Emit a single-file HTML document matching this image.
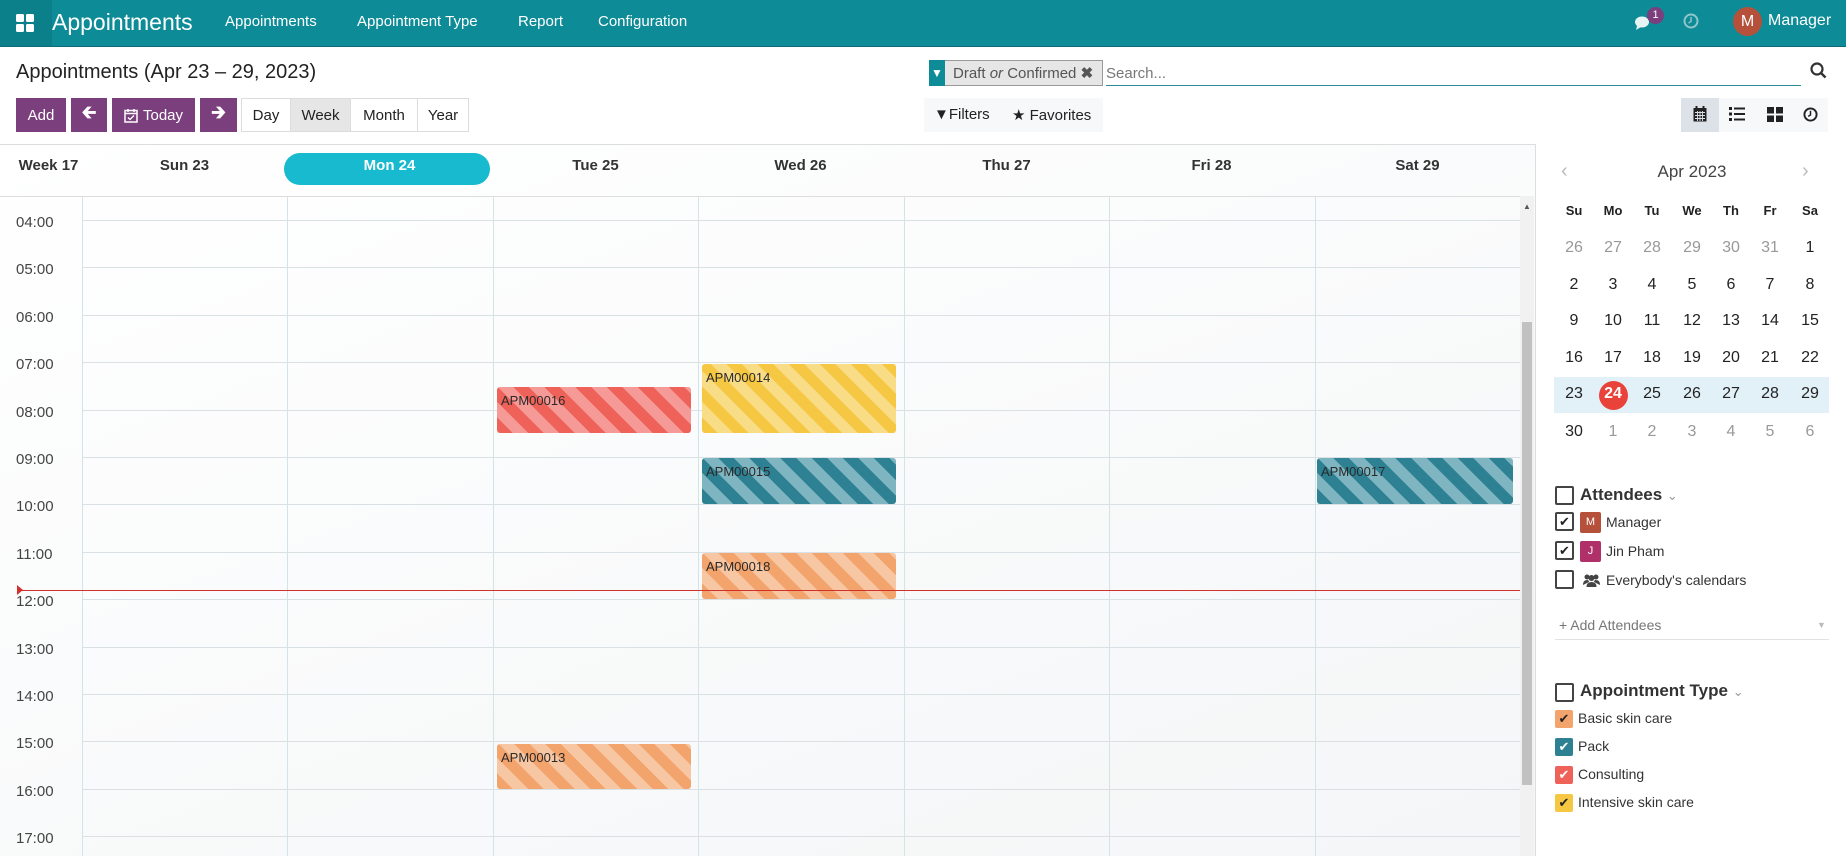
<!DOCTYPE html>
<html><head><meta charset="utf-8"><style>
*{box-sizing:border-box;margin:0;padding:0}
body{width:1846px;height:856px;overflow:hidden;font-family:"Liberation Sans",sans-serif;background:#fff;position:relative;color:#222}
.a{position:absolute}
.nav{left:0;top:0;width:1846px;height:47px;background:#0d8b97;border-bottom:1px solid #0a6d77}
.nav .m{color:#fff;font-size:15px;top:13px}
.btn{background:#7c3f7e;color:#fff;font-size:15px;display:flex;align-items:center;justify-content:center;top:98px;height:34px}
.vb{top:98px;height:34px;border:1px solid #dcdcdc;font-size:15px;display:flex;align-items:center;justify-content:center;color:#222;background:#fff}
.dh{top:157px;font-size:15px;font-weight:bold;color:#333;text-align:center;width:205px}
.vl{top:196px;width:1px;height:660px;background:#d3e4e8}
.hl{left:82px;width:1438px;height:1px;background:#d9e1e4}
.tl{left:16px;font-size:15px;color:#444}
.ev{border-radius:3px;font-size:13px;color:#2a2a2a;padding:6px 4px}
.mc{width:36px;text-align:center;font-size:16px;color:#222}
.cb{width:19px;height:19px;border:2px solid #444;border-radius:2px;background:#fff}
.ck{width:18px;height:18px;border-radius:2px;color:#fff;font-size:13px;text-align:center;line-height:18px}
.st{font-size:14px;color:#333}
</style></head><body>
<div class="a nav">
 <div class="a" style="left:0;top:0;width:52px;height:46px;background:#0b7f8a"></div>
 <svg class="a" style="left:16px;top:14px" width="18" height="18" viewBox="0 0 18 18" fill="#fff"><rect x="0" y="0" width="8" height="8" rx="1.5"/><rect x="10" y="0" width="8" height="8" rx="1.5"/><rect x="0" y="10" width="8" height="8" rx="1.5"/><rect x="10" y="10" width="8" height="8" rx="1.5"/></svg>
 <div class="a" style="left:52px;top:9px;color:#fff;font-size:23px">Appointments</div>
 <div class="a m" style="left:225px">Appointments</div>
 <div class="a m" style="left:357px">Appointment Type</div>
 <div class="a m" style="left:518px">Report</div>
 <div class="a m" style="left:598px">Configuration</div>
 <svg class="a" style="left:1634px;top:14px" width="20" height="18" viewBox="0 0 20 18" fill="#e8f3f4"><ellipse cx="8" cy="8" rx="7" ry="5.5"/><path d="M3 12 L2 16 L7 13Z"/></svg>
 <div class="a" style="left:1647px;top:7px;width:17px;height:17px;border-radius:50%;background:#7c3f7e;color:#fff;font-size:11px;text-align:center;line-height:17px">1</div>
 <svg class="a" style="left:1683px;top:13px" width="16" height="16" viewBox="0 0 16 16"><circle cx="8" cy="8" r="6.5" stroke="#8fc6cc" stroke-width="2" fill="none"/><path d="M8 4V8.5L5.5 10" stroke="#8fc6cc" stroke-width="1.5" fill="none"/></svg>
 <div class="a" style="left:1733px;top:7px;width:29px;height:29px;border-radius:50%;background:#b5503a;color:#fff;font-size:16px;text-align:center;line-height:29px">M</div>
 <div class="a m" style="left:1768px;font-size:16px;top:12px">Manager</div>
</div>

<div class="a" style="left:16px;top:61px;font-size:20px;color:#222">Appointments (Apr 23 – 29, 2023)</div>
<div class="a btn" style="left:16px;width:50px">Add</div>
<div class="a btn" style="left:71px;width:36px;font-size:18px;font-weight:bold">&#129136;</div>
<div class="a btn" style="left:112px;width:83px"><svg width="14" height="15" viewBox="0 0 14 15" style="margin-right:5px"><rect x="1" y="2.5" width="12" height="11.5" fill="none" stroke="#fff" stroke-width="1.5"/><path d="M1 5.5H13M4 1V4M10 1V4" stroke="#fff" stroke-width="1.5"/><path d="M4 9.5L6 11.5L10 7.5" stroke="#fff" stroke-width="1.3" fill="none"/></svg>Today</div>
<div class="a btn" style="left:200px;width:37px;font-size:18px;font-weight:bold">&#129138;</div>
<div class="a vb" style="left:241px;width:50px">Day</div>
<div class="a vb" style="left:290px;width:61px;background:#e6e6e6">Week</div>
<div class="a vb" style="left:350px;width:68px">Month</div>
<div class="a vb" style="left:417px;width:52px">Year</div>

<div class="a" style="left:929px;top:60px;width:174px;height:26px;background:#e6e6e6;border:1px solid #999"></div>
<div class="a" style="left:929px;top:60px;width:16px;height:26px;background:#0d8b97;color:#fff;font-size:12px;text-align:center;line-height:26px">&#9660;</div>
<div class="a" style="left:953px;top:64px;font-size:15px;color:#555">Draft <i>or</i> Confirmed <b style="color:#555">&#10006;</b></div>
<div class="a" style="left:1106px;top:65px;font-size:15px;color:#777">Search...</div>
<div class="a" style="left:1106px;top:85px;width:695px;height:1px;background:#2b8b96"></div>
<svg class="a" style="left:1810px;top:62px" width="17" height="17" viewBox="0 0 17 17"><circle cx="7" cy="7" r="5.5" stroke="#333" stroke-width="2.2" fill="none"/><path d="M11 11 L15.5 15.5" stroke="#333" stroke-width="2.5"/></svg>
<div class="a" style="left:924px;top:98px;width:179px;height:34px;background:#f6f8f9"></div>
<div class="a" style="left:934px;top:106px;font-size:15px;color:#222">&#9660;Filters</div>
<div class="a" style="left:1012px;top:106px;font-size:15px;color:#222">&#9733; Favorites</div>
<div class="a" style="left:1681px;top:98px;width:147px;height:34px;background:#f6f8f9"></div>
<div class="a" style="left:1681px;top:98px;width:38px;height:34px;background:#dde1e8"></div>
<svg class="a" style="left:1693px;top:106px" width="14" height="16" viewBox="0 0 14 16"><rect x="0.5" y="2" width="13" height="13.5" fill="#222"/><path d="M3.5 0V3M10.5 0V3" stroke="#222" stroke-width="2"/><path d="M2 6.5H12M2 9.5H12M2 12.5H12M4.5 5V15M7 5V15M9.5 5V15" stroke="#dde1e8" stroke-width="0.9"/></svg>
<svg class="a" style="left:1729px;top:107px" width="16" height="14" viewBox="0 0 16 14" fill="#222"><rect x="0" y="0" width="3" height="3"/><rect x="0" y="5.5" width="3" height="3"/><rect x="0" y="11" width="3" height="3"/><rect x="5" y="0.5" width="11" height="2"/><rect x="5" y="6" width="11" height="2"/><rect x="5" y="11.5" width="11" height="2"/></svg>
<svg class="a" style="left:1767px;top:107px" width="16" height="15" viewBox="0 0 16 15" fill="#222"><rect x="0" y="0" width="7" height="6.5"/><rect x="9" y="0" width="7" height="6.5"/><rect x="0" y="8.5" width="7" height="6.5"/><rect x="9" y="8.5" width="7" height="6.5"/></svg>
<svg class="a" style="left:1803px;top:107px" width="15" height="15" viewBox="0 0 16 16"><circle cx="8" cy="8" r="6.5" stroke="#222" stroke-width="2" fill="none"/><path d="M8 4V8.5L5.5 10" stroke="#222" stroke-width="1.6" fill="none"/></svg>

<div class="a" style="left:0;top:144px;width:1536px;height:1px;background:#ddd"></div>
<div class="a" style="left:0;top:145px;width:1536px;height:711px;background:linear-gradient(160deg,#fff,#f4f6f7)"></div>
<div class="a" style="left:0;top:196px;width:1520px;height:1px;background:#ddd"></div>
<div class="a dh" style="left:-54px">Week 17</div>
<div class="a dh" style="left:82px">Sun 23</div>
<div class="a" style="left:284px;top:153px;width:206px;height:32px;border-radius:16px;background:#17bacf"></div>
<div class="a dh" style="left:287px;color:#fff">Mon 24</div>
<div class="a dh" style="left:493px">Tue 25</div>
<div class="a dh" style="left:698px">Wed 26</div>
<div class="a dh" style="left:904px">Thu 27</div>
<div class="a dh" style="left:1109px">Fri 28</div>
<div class="a dh" style="left:1315px">Sat 29</div>

<div class="a vl" style="left:82px"></div><div class="a vl" style="left:287px"></div><div class="a vl" style="left:493px"></div><div class="a vl" style="left:698px"></div><div class="a vl" style="left:904px"></div><div class="a vl" style="left:1109px"></div><div class="a vl" style="left:1315px"></div>

<div class="a hl" style="top:220px"></div><div class="a hl" style="top:267px"></div><div class="a hl" style="top:315px"></div><div class="a hl" style="top:362px"></div><div class="a hl" style="top:410px"></div><div class="a hl" style="top:457px"></div><div class="a hl" style="top:504px"></div><div class="a hl" style="top:552px"></div><div class="a hl" style="top:599px"></div><div class="a hl" style="top:647px"></div><div class="a hl" style="top:694px"></div><div class="a hl" style="top:741px"></div><div class="a hl" style="top:789px"></div><div class="a hl" style="top:836px"></div>
<div class="a tl" style="top:214px">04:00</div><div class="a tl" style="top:261px">05:00</div><div class="a tl" style="top:309px">06:00</div><div class="a tl" style="top:356px">07:00</div><div class="a tl" style="top:404px">08:00</div><div class="a tl" style="top:451px">09:00</div><div class="a tl" style="top:498px">10:00</div><div class="a tl" style="top:546px">11:00</div><div class="a tl" style="top:593px">12:00</div><div class="a tl" style="top:641px">13:00</div><div class="a tl" style="top:688px">14:00</div><div class="a tl" style="top:735px">15:00</div><div class="a tl" style="top:783px">16:00</div><div class="a tl" style="top:830px">17:00</div>

<div class="a ev" style="left:497px;top:387px;width:194px;height:46px;background:repeating-linear-gradient(45deg,#ee6259 0 11px,#f59a96 11px 22px)">APM00016</div>
<div class="a ev" style="left:702px;top:364px;width:194px;height:69px;background:repeating-linear-gradient(45deg,#f6c743 0 11px,#f9dc86 11px 22px)">APM00014</div>
<div class="a ev" style="left:702px;top:458px;width:194px;height:46px;background:repeating-linear-gradient(45deg,#2e8193 0 11px,#7fb5c1 11px 22px)">APM00015</div>
<div class="a ev" style="left:702px;top:553px;width:194px;height:46px;background:repeating-linear-gradient(45deg,#f3a36c 0 11px,#f7c6a2 11px 22px)">APM00018</div>
<div class="a ev" style="left:1317px;top:458px;width:196px;height:46px;background:repeating-linear-gradient(45deg,#2e8193 0 11px,#7fb5c1 11px 22px)">APM00017</div>
<div class="a ev" style="left:497px;top:744px;width:194px;height:45px;background:repeating-linear-gradient(45deg,#f3a36c 0 11px,#f7c6a2 11px 22px)">APM00013</div>
<div class="a" style="left:18px;top:590px;width:1502px;height:1px;background:#d0312d"></div>
<div class="a" style="left:17px;top:585px;width:0;height:0;border-left:6px solid #d0312d;border-top:5px solid transparent;border-bottom:5px solid transparent"></div>

<div class="a" style="left:1520px;top:196px;width:14px;height:660px;background:#f1f1f1"></div>
<div class="a" style="left:1522px;top:322px;width:10px;height:463px;background:#c1c1c1"></div>
<div class="a" style="left:1523px;top:202px;font-size:8px;color:#555">&#9650;</div>
<div class="a" style="left:1535px;top:144px;width:1px;height:712px;background:#ddd"></div>

<div class="a" style="left:1561px;top:160px;font-size:20px;color:#bbb">&#8249;</div>
<div class="a" style="left:1802px;top:160px;font-size:20px;color:#bbb">&#8250;</div>
<div class="a" style="left:1632px;top:162px;width:120px;text-align:center;font-size:17px;color:#444">Apr 2023</div>
<div class="a" style="left:1554px;top:377px;width:275px;height:36px;background:#e2f1f8"></div>
<div class="a" style="left:1599px;top:381px;width:29px;height:29px;border-radius:50%;background:#e8423a"></div>
<div class="a mc" style="left:1556px;top:203px;font-size:13px;font-weight:bold">Su</div><div class="a mc" style="left:1595px;top:203px;font-size:13px;font-weight:bold">Mo</div><div class="a mc" style="left:1634px;top:203px;font-size:13px;font-weight:bold">Tu</div><div class="a mc" style="left:1674px;top:203px;font-size:13px;font-weight:bold">We</div><div class="a mc" style="left:1713px;top:203px;font-size:13px;font-weight:bold">Th</div><div class="a mc" style="left:1752px;top:203px;font-size:13px;font-weight:bold">Fr</div><div class="a mc" style="left:1792px;top:203px;font-size:13px;font-weight:bold">Sa</div>
<div class="a mc" style="left:1556px;top:239px;color:#999">26</div><div class="a mc" style="left:1595px;top:239px;color:#999">27</div><div class="a mc" style="left:1634px;top:239px;color:#999">28</div><div class="a mc" style="left:1674px;top:239px;color:#999">29</div><div class="a mc" style="left:1713px;top:239px;color:#999">30</div><div class="a mc" style="left:1752px;top:239px;color:#999">31</div><div class="a mc" style="left:1792px;top:239px">1</div>
<div class="a mc" style="left:1556px;top:276px">2</div><div class="a mc" style="left:1595px;top:276px">3</div><div class="a mc" style="left:1634px;top:276px">4</div><div class="a mc" style="left:1674px;top:276px">5</div><div class="a mc" style="left:1713px;top:276px">6</div><div class="a mc" style="left:1752px;top:276px">7</div><div class="a mc" style="left:1792px;top:276px">8</div>
<div class="a mc" style="left:1556px;top:312px">9</div><div class="a mc" style="left:1595px;top:312px">10</div><div class="a mc" style="left:1634px;top:312px">11</div><div class="a mc" style="left:1674px;top:312px">12</div><div class="a mc" style="left:1713px;top:312px">13</div><div class="a mc" style="left:1752px;top:312px">14</div><div class="a mc" style="left:1792px;top:312px">15</div>
<div class="a mc" style="left:1556px;top:349px">16</div><div class="a mc" style="left:1595px;top:349px">17</div><div class="a mc" style="left:1634px;top:349px">18</div><div class="a mc" style="left:1674px;top:349px">19</div><div class="a mc" style="left:1713px;top:349px">20</div><div class="a mc" style="left:1752px;top:349px">21</div><div class="a mc" style="left:1792px;top:349px">22</div>
<div class="a mc" style="left:1556px;top:385px">23</div><div class="a mc" style="left:1595px;top:385px;color:#fff;font-weight:bold">24</div><div class="a mc" style="left:1634px;top:385px">25</div><div class="a mc" style="left:1674px;top:385px">26</div><div class="a mc" style="left:1713px;top:385px">27</div><div class="a mc" style="left:1752px;top:385px">28</div><div class="a mc" style="left:1792px;top:385px">29</div>
<div class="a mc" style="left:1556px;top:423px">30</div><div class="a mc" style="left:1595px;top:423px;color:#999">1</div><div class="a mc" style="left:1634px;top:423px;color:#999">2</div><div class="a mc" style="left:1674px;top:423px;color:#999">3</div><div class="a mc" style="left:1713px;top:423px;color:#999">4</div><div class="a mc" style="left:1752px;top:423px;color:#999">5</div><div class="a mc" style="left:1792px;top:423px;color:#999">6</div>

<div class="a cb" style="left:1555px;top:486px"></div>
<div class="a" style="left:1580px;top:485px;font-size:17px;font-weight:bold;color:#333">Attendees <span style="color:#999;font-weight:normal;font-size:13px">&#8964;</span></div>
<div class="a cb" style="left:1555px;top:512px;font-size:13px;line-height:15px;text-align:center">&#10004;</div>
<div class="a" style="left:1580px;top:512px;width:21px;height:21px;background:#b5503a;border-radius:2px;color:#fff;font-size:11px;text-align:center;line-height:21px">M</div>
<div class="a st" style="left:1606px;top:514px">Manager</div>
<div class="a cb" style="left:1555px;top:541px;font-size:13px;line-height:15px;text-align:center">&#10004;</div>
<div class="a" style="left:1580px;top:541px;width:21px;height:21px;background:#b0306a;border-radius:2px;color:#fff;font-size:11px;text-align:center;line-height:21px">J</div>
<div class="a st" style="left:1606px;top:543px">Jin Pham</div>
<div class="a cb" style="left:1555px;top:570px"></div>
<svg class="a" style="left:1583px;top:573px" width="17" height="14" viewBox="0 0 17 14" fill="#444"><circle cx="4" cy="4" r="2.5"/><circle cx="13" cy="4" r="2.5"/><circle cx="8.5" cy="5" r="3"/><path d="M0 12Q0 7 4 7Q6 7 6 9Z M17 12Q17 7 13 7Q11 7 11 9Z M3.5 14Q3.5 9 8.5 9Q13.5 9 13.5 14Z"/></svg>
<div class="a st" style="left:1606px;top:572px">Everybody's calendars</div>
<div class="a" style="left:1559px;top:617px;font-size:14px;color:#777">+ Add Attendees</div>
<div class="a" style="left:1817px;top:620px;font-size:9px;color:#bbb">&#9660;</div>
<div class="a" style="left:1555px;top:639px;width:274px;height:1px;background:#e2e2e2"></div>

<div class="a cb" style="left:1555px;top:683px"></div>
<div class="a" style="left:1580px;top:681px;font-size:17px;font-weight:bold;color:#333">Appointment Type <span style="color:#999;font-weight:normal;font-size:13px">&#8964;</span></div>
<div class="a ck" style="left:1555px;top:710px;background:#f3a36c;color:#222">&#10004;</div><div class="a st" style="left:1578px;top:710px">Basic skin care</div>
<div class="a ck" style="left:1555px;top:738px;background:#2e8193">&#10004;</div><div class="a st" style="left:1578px;top:738px">Pack</div>
<div class="a ck" style="left:1555px;top:766px;background:#ee6259">&#10004;</div><div class="a st" style="left:1578px;top:766px">Consulting</div>
<div class="a ck" style="left:1555px;top:794px;background:#f6c743;color:#222">&#10004;</div><div class="a st" style="left:1578px;top:794px">Intensive skin care</div>
</body></html>
